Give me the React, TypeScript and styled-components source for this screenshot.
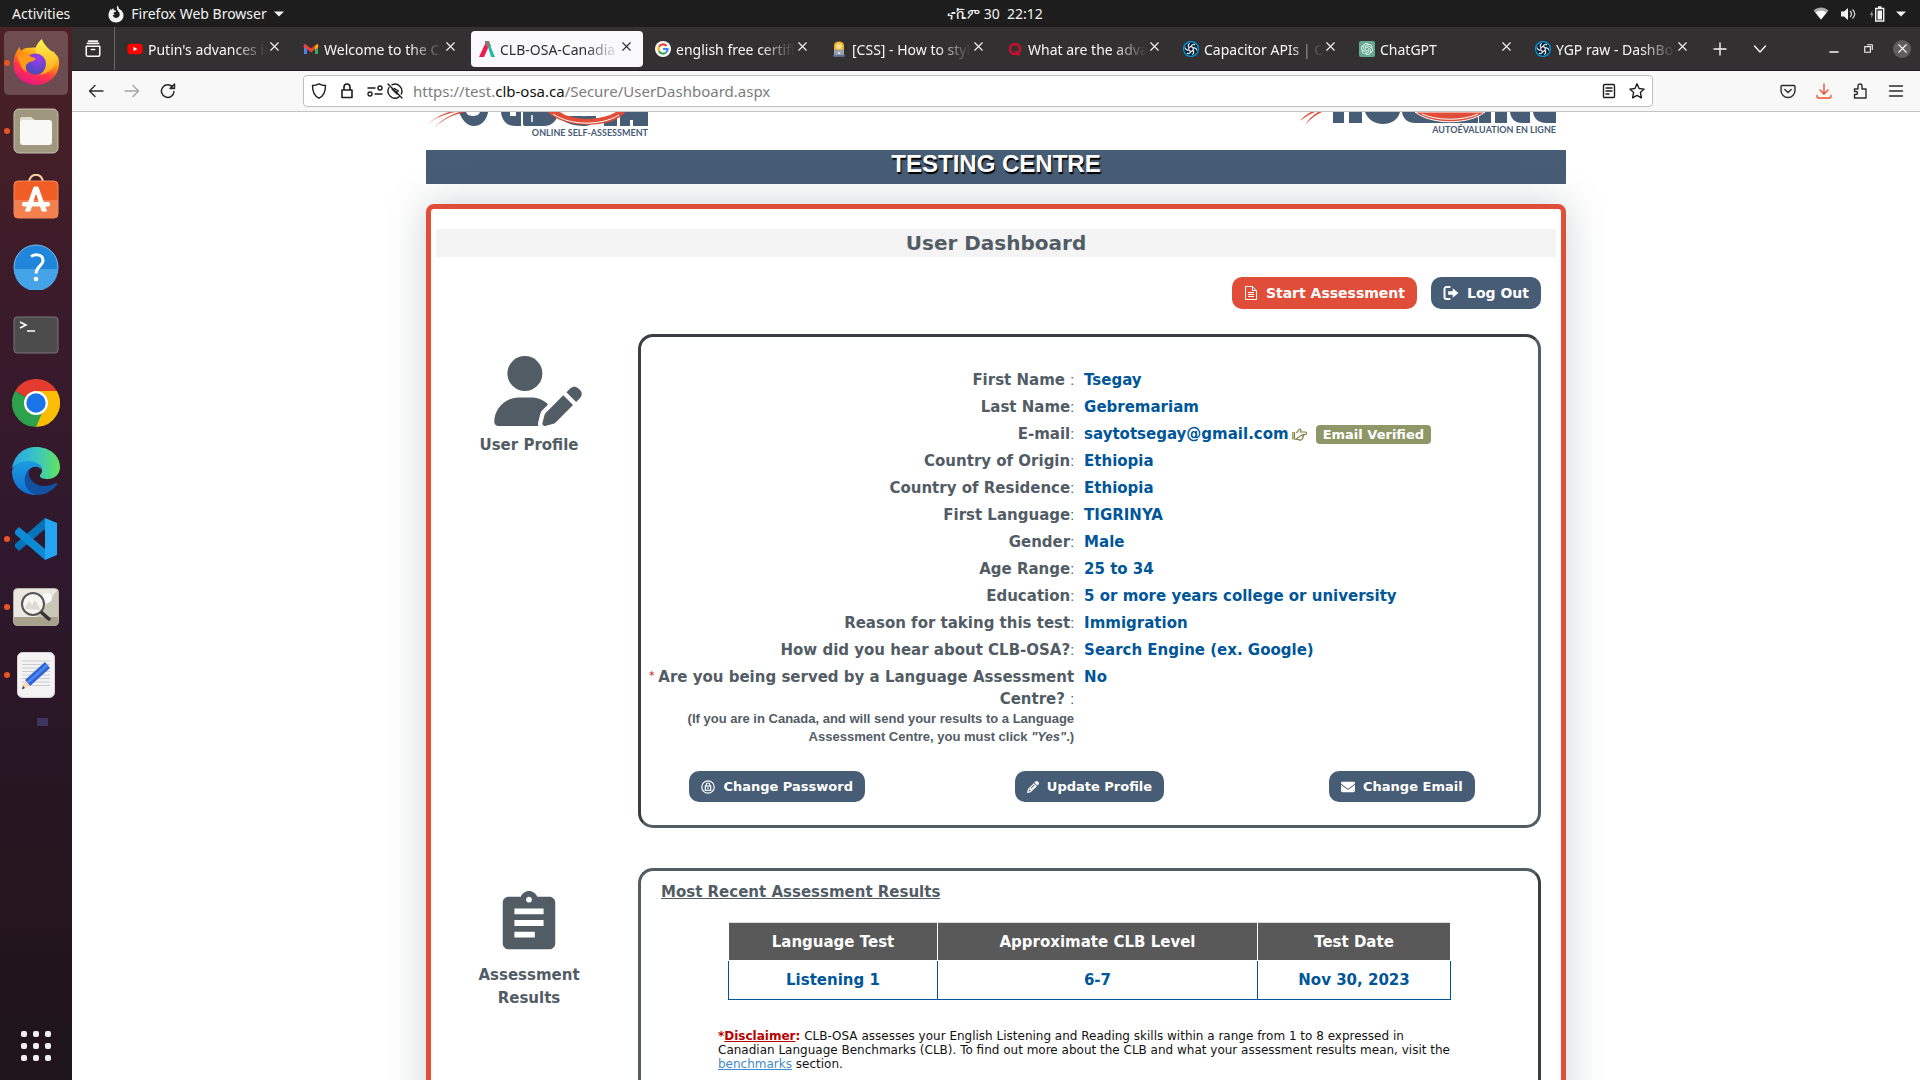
import React from "react";
import styled, { createGlobalStyle } from "styled-components";
import { FaUserPen, FaPencil, FaEnvelope, FaYoutube } from "react-icons/fa6";
import { MdAssignment } from "react-icons/md";
import { SiOpenai } from "react-icons/si";

const uiFont = `"Noto Sans", "Open Sans", sans-serif`;
const pageFont = `"DejaVu Sans", Verdana, sans-serif`;
const slate = "#525c65";
const navy = "#475c75";
const blue = "#005698";
const tomato = "#e04e39";

const GlobalStyle = createGlobalStyle`
  *, *::before, *::after { box-sizing: border-box; }
  html, body { margin: 0; height: 100%; overflow: hidden; background: #fff; }
  button { font: inherit; color: inherit; border: 0; background: none; padding: 0; cursor: pointer; }
  a { color: inherit; }
`;

/* ---------- desktop shell ---------- */

const Desktop = styled.div`
  display: flex;
  flex-direction: column;
  height: 100vh;
  font: 14px/20px ${uiFont};
`;

const TopBar = styled.header`
  display: grid;
  grid-template-columns: 1fr auto 1fr;
  align-items: center;
  height: 27px;
  flex: none;
  padding: 0 14px 0 12px;
  background: #1d1d1d;
  color: #f2f2f2;
`;

const TopGroup = styled.div<{ $end?: boolean }>`
  display: flex;
  align-items: center;
  justify-content: ${(p) => (p.$end ? "flex-end" : "flex-start")};
  gap: ${(p) => (p.$end ? "11px" : "38px")};
`;

const AppMenu = styled.button`
  display: flex;
  align-items: center;
  gap: 7px;
`;

const Clock = styled.time`
  padding-left: 72px;
  white-space: pre;
`;

const Body = styled.div`
  display: flex;
  flex: 1;
  min-height: 0;
`;

const Dock = styled.nav`
  display: flex;
  flex-direction: column;
  align-items: center;
  gap: 4px;
  width: 72px;
  flex: none;
  padding: 4px 0 2px;
  background: linear-gradient(#4a2124 0%, #3b1b2a 25%, #2f182d 50%, #25151f 80%, #1f141a 100%);
`;

const DockItem = styled.button<{ $active?: boolean; $running?: boolean; $last?: boolean }>`
  position: relative;
  display: grid;
  place-items: center;
  width: 64px;
  height: 64px;
  flex: none;
  margin-top: ${(p) => (p.$last ? "auto" : "0")};
  border-radius: 5px;
  background: ${(p) => (p.$active ? "rgba(255,255,255,.2)" : "transparent")};
  &::before {
    content: "";
    display: ${(p) => (p.$running ? "block" : "none")};
    position: absolute;
    left: 0;
    top: 29px;
    width: 6px;
    height: 6px;
    border-radius: 50%;
    background: #e95420;
  }
`;

const DockGhost = styled.span`
  width: 11px;
  height: 8px;
  margin: 7px 0 0 12px;
  background: #3c3560;
`;

/* ---------- browser chrome ---------- */

const Browser = styled.div`
  display: flex;
  flex-direction: column;
  flex: 1;
  min-width: 0;
`;

const TabStrip = styled.div`
  display: flex;
  align-items: stretch;
  height: 44px;
  flex: none;
  background: #333031;
  border-bottom: 1px solid #1c1b22;
  color: #f7f7f7;
`;

const StripButton = styled.button<{ $w: number; $line?: boolean }>`
  display: grid;
  place-items: center;
  width: ${(p) => p.$w}px;
  flex: none;
  border-right: ${(p) => (p.$line ? "1px solid #6b6869" : "0")};
`;

const Tabs = styled.div`
  display: flex;
  flex: 0 1 1584px;
  min-width: 0;
  margin-left: 2px;
`;

const Tab = styled.div<{ $active?: boolean }>`
  display: flex;
  align-items: center;
  flex: 1 1 0;
  min-width: 0;
  margin: 4px 2px 3px;
  padding: 0 9px 0 8px;
  border-radius: 4px;
  background: ${(p) => (p.$active ? "#f9f9fb" : "transparent")};
  color: ${(p) => (p.$active ? "#2e2e2e" : "inherit")};
`;

const TabTitle = styled.span`
  flex: 1;
  min-width: 0;
  margin-left: 5px;
  padding-top: 2px;
  overflow: hidden;
  white-space: nowrap;
  mask-image: linear-gradient(to left, transparent, #000 34px);
`;

const Icon16 = styled.svg`
  width: 16px;
  height: 16px;
  flex: none;
  display: block;
`;

const WindowControls = styled.div`
  display: flex;
  align-items: center;
  margin-left: auto;
  padding-right: 1px;
`;

const Toolbar = styled.div`
  display: flex;
  align-items: center;
  height: 41px;
  flex: none;
  padding: 0 6px;
  background: #f8f8f8;
  border-bottom: 1px solid #c4c4c4;
  color: #2b2b2b;
`;

const ToolButton = styled.button<{ $dim?: boolean; $hot?: boolean }>`
  display: grid;
  place-items: center;
  width: 36px;
  height: 32px;
  flex: none;
  opacity: ${(p) => (p.$dim ? 0.4 : 1)};
  color: ${(p) => (p.$hot ? "#e95420" : "inherit")};
`;

const UrlBar = styled.div`
  display: flex;
  align-items: center;
  flex: 1;
  min-width: 0;
  height: 32px;
  margin: 0 117px;
  padding: 0 7px;
  border: 1px solid #bfbfc3;
  border-radius: 4px;
  background: #fff;
  color: #1d1d1d;
`;

const UrlIcons = styled.div<{ $gap: number }>`
  display: flex;
  align-items: center;
  gap: ${(p) => p.$gap}px;
`;

const UrlText = styled.div`
  flex: 1;
  margin-left: 10px;
  color: #7c7c7c;
  font-size: 15px;
  white-space: nowrap;
  overflow: hidden;
  b { font-weight: 400; color: #111; }
`;

/* ---------- web page ---------- */

const Page = styled.main`
  flex: 1;
  min-height: 0;
  overflow: hidden;
  background: #fff;
  font: 15px/22px ${pageFont};
  color: ${slate};
`;

const Container = styled.div`
  max-width: 1140px;
  margin: 0 auto;
`;

const LogoRow = styled.div`
  display: flex;
  justify-content: space-between;
  height: 38px;
  padding-right: 10px;
`;

const Logo = styled.a`
  display: flex;
  flex-direction: column;
  align-items: flex-end;
  text-decoration: none;
  color: ${navy};
  font: bold 9px/12px Lato, "Liberation Sans", sans-serif;
  svg { display: block; }
`;

const Banner = styled.h1`
  margin: 0 0 20px;
  height: 34px;
  background: ${navy};
  color: #fff;
  text-align: center;
  font: bold 24px/27px "Liberation Sans", Arial, sans-serif;
  text-shadow: 1px 2px 1px #000;
`;

const Shell = styled.section`
  border: 5px solid ${tomato};
  border-radius: 8px;
  padding: 20px 5px;
  background: #fff;
  box-shadow: 0 0 40px rgba(82, 92, 101, 0.28);
`;

const Title = styled.h2`
  margin: 0 0 20px;
  background: #f4f4f4;
  text-align: center;
  font: bold 20px/28px ${pageFont};
`;

const Actions = styled.div`
  display: flex;
  justify-content: flex-end;
  gap: 14px;
  margin: 0 15px 25px 0;
`;

const PillButton = styled.button<{ $hot?: boolean; $small?: boolean; $icon?: number }>`
  display: flex;
  align-items: center;
  gap: 8px;
  height: ${(p) => (p.$small ? "31px" : "32px")};
  padding: 0 12px;
  border-radius: 10px;
  background: ${(p) => (p.$hot ? tomato : navy)};
  color: #fff;
  font: bold ${(p) => (p.$small ? "13px" : "14px")}/20px ${pageFont};
  white-space: nowrap;
  svg { width: ${(p) => p.$icon ?? 14}px; height: ${(p) => p.$icon ?? 14}px; }
`;

const Section = styled.section`
  display: grid;
  grid-template-columns: 186px minmax(0, 1fr);
  gap: 16px;
  margin: 0 15px 40px 0;
`;

const SideLabel = styled.h3`
  display: flex;
  flex-direction: column;
  align-items: center;
  gap: 6px;
  margin: 0;
  padding: 20px 30px 0;
  text-align: center;
  font: bold 15px/23px ${pageFont};
`;

const BigIcon = styled.span<{ $w: number; $h: number }>`
  display: flex;
  align-items: center;
  width: 70px;
  height: ${(p) => p.$h}px;
  svg { flex: none; width: ${(p) => p.$w}px; height: 70px; }
`;

const Panel = styled.div<{ $inset?: boolean }>`
  border: 3px solid ${slate};
  border-color: ${(p) =>
    p.$inset ? `#3a3f45 ${slate} ${slate} #3a3f45` : `${slate} #3a3f45 #3a3f45 ${slate}`};
  border-radius: 15px;
`;

const Fields = styled.dl`
  display: grid;
  grid-template-columns: 23fr 24fr;
  column-gap: 10px;
  row-gap: 5px;
  margin: 32px 2px 25px 0;
  font-weight: bold;
  dt { text-align: right; }
  dd { margin: 0; color: ${blue}; }
`;

const Colon = styled.span`
  font: 14px/20px "Liberation Sans", sans-serif;
`;

const Star = styled.span`
  margin-right: 4px;
  vertical-align: 3px;
  color: #c00;
  font: 10px/10px ${pageFont};
`;

const Hint = styled.small`
  display: block;
  font: bold 13px/18px "Liberation Sans", Arial, sans-serif;
`;

const EmailValue = styled.span`
  display: flex;
  align-items: center;
  gap: 3px;
`;

const Badge = styled.span`
  margin-left: 6px;
  padding: 0 7px;
  border-radius: 4px;
  background: #8f9768;
  color: #fff;
  font: bold 13px/19px ${pageFont};
`;

const ProfileActions = styled.div`
  display: grid;
  grid-template-columns: repeat(3, 1fr);
  justify-items: center;
  margin: 0 -20px 23px;
`;

const ResultsTitle = styled.h4`
  margin: 10px 20px 19px;
  font: bold 15px/22px ${pageFont};
  text-decoration: underline;
`;

const Results = styled.table`
  width: calc(100% - 174px);
  margin: 0 87px 29px;
  border-collapse: separate;
  border-spacing: 0;
  table-layout: fixed;
  font-weight: bold;
  text-align: center;
  th {
    height: 39px;
    padding: 0;
    background: #595959;
    color: #fff;
    border-top: 1px solid #ddd;
    border-bottom: 1px solid #fff;
    border-left: 1px solid #fff;
  }
  td {
    height: 39px;
    padding: 0;
    color: ${blue};
    border-left: 1px solid ${blue};
    border-bottom: 1px solid ${blue};
  }
  th:last-child { border-right: 1px solid #fff; }
  td:last-child { border-right: 1px solid ${blue}; }
`;

const Col = styled.col<{ $w: string }>`
  width: ${(p) => p.$w};
`;

const Disclaimer = styled.p`
  margin: 0 77px 60px;
  color: #111;
  font: 12px/14px ${pageFont};
  strong { color: #b80000; }
  a { color: #428bca; }
`;

/* ---------- icons ---------- */

type LineProps = { d: string; size?: number; width?: number };
const Line = ({ d, size = 16, width = 1.4 }: LineProps) => (
  <svg width={size} height={size} viewBox="0 0 16 16" fill="none" stroke="currentColor" strokeWidth={width} strokeLinecap="round" strokeLinejoin="round">
    <path d={d} />
  </svg>
);

const CloseX = () => <Line d="M4 4l8 8M12 4l-8 8" size={15} width={1.2} />;

const Caret = () => (
  <svg width="10" height="6" viewBox="0 0 10 6"><path d="M0 .5h10L5 5.5z" fill="#f2f2f2" /></svg>
);

const FirefoxMono = () => (
  <svg width="16" height="18" viewBox="0 0 16 18">
    <path d="M9.500.5c1 1.300 1.200 2.200 1.300 3.200C12.900 4.500 15.500 6.800 15.500 10.300c0 4.200-3.200 7.200-7.500 7.200S.5 14.400.5 10.300C.5 7.300 1.800 5.300 3 3.500l.4 1.700L5.200 3l.8 2.300 2.200.4c-.3 1.200-1.400 1.600-2.400 1.700-.6 1 .2 2 1.200 1.900-.6 1-1.700.8-2.300.5.200 2 1.700 3.100 3.500 3.100 2.300 0 3.700-1.700 3.500-3.900C11.500 6.700 9.500 6 9 4 8.700 2.600 9 1.400 9.500.5z" fill="#f2f2f2" />
  </svg>
);

const FirefoxIcon = () => (
  <svg width="46" height="48" viewBox="0 0 46 48">
    <defs>
      <linearGradient id="fxBody" x1=".8" y1="0" x2=".3" y2="1">
        <stop offset="0" stopColor="#fff44f" /><stop offset=".35" stopColor="#ff980e" />
        <stop offset=".65" stopColor="#ff3647" /><stop offset="1" stopColor="#e31587" />
      </linearGradient>
      <radialGradient id="fxGlobe" cx=".6" cy=".25" r=".8">
        <stop offset="0" stopColor="#a338f0" /><stop offset="1" stopColor="#3e4fb0" />
      </radialGradient>
      <linearGradient id="fxFlame" x1=".6" y1="0" x2=".6" y2="1">
        <stop offset="0" stopColor="#fff44f" /><stop offset="1" stopColor="#ffa51d" />
      </linearGradient>
    </defs>
    <path d="M4 12c1-2 2-3 3-4 0 2 .5 3 1 4 2-2 4-3 6-3 8-1 24-2 31 9 2 5 1 12-2 17-4 7-12 11-20 11S5 41 2 33C-1 25 1 17 4 12z" fill="url(#fxBody)" />
    <path d="M29 0c-5 4-8 10-6 14 2 3 8 5 9 11 1 5-2 9-6 11 9-1 17-7 18-17-1-3-2-5-4-7l-1 3C37 9 31 7 29 0z" fill="url(#fxFlame)" />
    <circle cx="22.500" cy="25" r="10.500" fill="url(#fxGlobe)" />
    <path d="M4 15c3-2 6-1 9 1l9 3c1 1 0 3-5 4-2 0-2 2-4 3 0 2-1 4 1 7-6-2-8-10-10-18z" fill="#ff9a1a" />
    <path d="M7 8c0 4 1 5 5 7l-7 2c-1-3 0-6 2-9z" fill="#ff8a16" />
  </svg>
);

const FilesIcon = () => (
  <svg width="46" height="46" viewBox="0 0 46 46">
    <rect x="1" y="1" width="44" height="44" rx="5" fill="#9f987f" stroke="#c4bfae" />
    <path d="M7 11a2 2 0 0 1 2-2h9l4 3v8H7z" fill="#dedbd0" />
    <rect x="7" y="12" width="32" height="25" rx="3" fill="#f8f8f6" />
  </svg>
);

const SoftwareIcon = () => (
  <svg width="46" height="50" viewBox="0 0 46 50">
    <path d="M16 9c0-11 14-11 14 0" fill="none" stroke="#fbd3a5" strokeWidth="2" />
    <rect x="1" y="7" width="44" height="37" rx="4" fill="#f05e26" stroke="#f58a5c" />
    <path d="M1 26h44v14a4 4 0 0 1-4 4H5a4 4 0 0 1-4-4z" fill="#f4804f" />
    <path d="M21 13h4l8.500 24h-4.500L23 18l-6 19h-4.500z" fill="#fff" stroke="#fff" />
    <rect x="9" y="28" width="28" height="4.500" rx="2" fill="#fff" />
  </svg>
);

const HelpIcon = () => (
  <svg width="46" height="46" viewBox="0 0 46 46">
    <circle cx="23" cy="23" r="22" fill="#1f86dc" stroke="#7bbcf0" />
    <path d="M1 25a22 22 0 0 0 44 0z" fill="#45a3e8" />
    <path d="M18 12.500c5-3 12-2 12 4 0 5-7 6-7 13" fill="none" stroke="#fff" strokeWidth="3" />
    <circle cx="23" cy="35" r="2.300" fill="#fff" />
  </svg>
);

const TerminalIcon = () => (
  <svg width="46" height="38" viewBox="0 0 46 38">
    <rect x="1" y="1" width="44" height="36" rx="3" fill="#4c4c4c" stroke="#767676" />
    <path d="M7 6l6 3-6 3M14 15h8" fill="none" stroke="#fff" strokeWidth="1.600" />
  </svg>
);

const ChromeIcon = () => (
  <svg width="48" height="48" viewBox="0 0 48 48">
    <path d="M24 24L3.200 12A24 24 0 0 1 44.800 12z" fill="#e33b2e" />
    <path d="M24 24L3.200 12A24 24 0 0 0 24 48l10.400-18z" fill="#2da24c" />
    <path d="M24 24h10.400L24 48A24 24 0 0 0 44.800 12H24z" fill="#fbbc04" />
    <circle cx="24" cy="24" r="12" fill="#fff" /><circle cx="24" cy="24" r="9.700" fill="#1a73e8" />
  </svg>
);

const EdgeIcon = () => (
  <svg width="48" height="48" viewBox="0 0 48 48">
    <defs>
      <linearGradient id="edTop" x1="0" y1=".5" x2="1" y2=".5">
        <stop offset="0" stopColor="#2aa5e8" /><stop offset=".5" stopColor="#38c4c6" /><stop offset="1" stopColor="#62e45c" />
      </linearGradient>
      <linearGradient id="edBlue" x1="0" y1="0" x2="0" y2="1">
        <stop offset="0" stopColor="#1b9de2" /><stop offset="1" stopColor="#0f6fd0" />
      </linearGradient>
    </defs>
    <path d="M0 22C2 7 13 0 24 0c14 0 24 9 24 20 0 8-6 12-12 12-5 0-8-1-8-3s2-2 2-6c0-5-6-8-13-8C9 15 3 18 0 22z" fill="url(#edTop)" />
    <path d="M0 24c2-6 9-10 16-10 8 0 14 4 14 9-2-3-8-5-12-1-8 9-1 21 6 26C10 48 0 38 0 24z" fill="url(#edBlue)" />
    <path d="M18 21c-4 8 3 18 14 18 5 0 8-1 12-3 1 0 2 1 1 2-5 6-12 10-19 10-9-1-15-10-13-18 1-5 3-7 5-9z" fill="#12519f" />
  </svg>
);

const CodeIcon = () => (
  <svg width="44" height="44" viewBox="0 0 44 44">
    <path d="M31 1L43 6v32l-12 5z" fill="#24a5f2" />
    <path d="M31 1v11L5 34l-4-4v-3z" fill="#0673b8" />
    <path d="M31 43V32L5 10l-4 4v3z" fill="#0d8ad6" />
  </svg>
);

const ViewerIcon = () => (
  <svg width="46" height="38" viewBox="0 0 46 38">
    <rect x=".5" y=".5" width="45" height="37" rx="4" fill="#e9e9e2" stroke="#b5b3a4" />
    <path d="M45 1L24 29h21z" fill="#c9c7b6" /><path d="M1 29h44v5a4 4 0 0 1-4 4H5a4 4 0 0 1-4-4z" fill="#a8a28c" />
    <circle cx="34" cy="10" r="5" fill="#fafafa" />
    <circle cx="20" cy="16" r="11" fill="#f7f7f5" fillOpacity=".85" stroke="#555" strokeWidth="2" />
    <path d="M11 21l5-8 3 4 3-5 6 10z" fill="#dedcd2" />
    <path d="M28 24l9 8" stroke="#333" strokeWidth="3.500" />
  </svg>
);

const EditorIcon = () => (
  <svg width="38" height="46" viewBox="0 0 38 46">
    <rect x=".5" y=".5" width="37" height="45" rx="5" fill="#f3f3f3" stroke="#d4d4d4" />
    <path d="M5 9h28M5 12.500h28M5 16h28M5 19.500h28M5 23h28M5 26.500h28M5 30h28M5 33.500h28" stroke="#cdcdcd" />
    <path d="M28 10l5 6-20 18-5-6z" fill="#2d63d6" /><path d="M29.500 12l1.700 2-20 18-1.700-2z" fill="#5288ee" />
    <path d="M8 28l5 6-8 3z" fill="#f4d9b4" /><path d="M6 34l2 2-3 1.500z" fill="#333" />
  </svg>
);

const GridIcon = () => (
  <svg width="30" height="30" viewBox="0 0 30 30" fill="#efefef">
    {[0, 12, 24].map((y) => [0, 12, 24].map((x) => <rect key={`${x}-${y}`} x={x} y={y} width="6" height="6" rx="2" />))}
  </svg>
);

const GmailFav = () => (
  <Icon16 viewBox="0 0 16 16">
    <path d="M1 3v10h3V7z" fill="#4285f4" /><path d="M15 3v10h-3V7z" fill="#34a853" />
    <path d="M1 4l7 5.500L15 4" fill="none" stroke="#ea4335" strokeWidth="3" />
    <path d="M12 5.500L15 3v3l-3 2.500z" fill="#fbbc04" />
  </Icon16>
);
const ClbFav = () => (
  <Icon16 viewBox="0 0 16 16">
    <path d="M6 0h4l2 5-3 2L6 6z" fill="#8a7a72" /><path d="M6 3l3 4-4 9H0z" fill="#f2174d" /><path d="M9 6l2-2 5 12h-4z" fill="#28b8a5" />
  </Icon16>
);
const GoogleFav = () => (
  <Icon16 viewBox="0 0 16 16">
    <circle cx="8" cy="8" r="8" fill="#fff" />
    <g fill="none" strokeWidth="2.200">
      <path d="M11.500 5A4.600 4.600 0 0 0 4 5.800" stroke="#ea4335" /><path d="M4 5.800a4.600 4.600 0 0 0 0 4.400" stroke="#fbbc04" />
      <path d="M4 10.200a4.600 4.600 0 0 0 7 1.300" stroke="#34a853" /><path d="M11 11.500c1-.8 1.600-2 1.600-3.500H8" stroke="#4285f4" />
    </g>
  </Icon16>
);
const CoderFav = () => (
  <Icon16 viewBox="0 0 16 16">
    <path d="M3 9V4.500C3 2 5 .5 8 .5s5 1.500 5 4V9z" fill="#f0b429" /><circle cx="8" cy="5.500" r="3" fill="#ffdc8a" />
    <rect x="3" y="8.500" width="10" height="7" rx="1" fill="#9aa2ab" /><path d="M2 15.500h12V14H2z" fill="#5d6f97" /><circle cx="8" cy="12" r="1" fill="#eee" />
  </Icon16>
);
const QuoraFav = () => (
  <Icon16 viewBox="0 0 16 16">
    <circle cx="8" cy="8" r="5" fill="none" stroke="#c8102e" strokeWidth="2.600" /><path d="M8.500 10l3.500 4.500" stroke="#c8102e" strokeWidth="2" />
  </Icon16>
);
const QuasarFav = () => (
  <Icon16 viewBox="0 0 16 16">
    <circle cx="8" cy="8" r="7.400" fill="#0b1a28" stroke="#00a3e8" strokeWidth="1.200" />
    <g fill="none" stroke="#e6f4fb" strokeWidth="1.200">
      <path d="M8 5.500c1-2.500 3-2.300 4-1.500M10.400 7c2.500-.5 3.400 1.200 3.200 2.500M10 9.400c1.700 2 .5 3.600-.8 4.100M8 10.500c-1 2.500-3 2.300-4 1.500M5.600 9c-2.500.5-3.400-1.200-3.200-2.500M6 6.600C4.300 4.600 5.500 3 6.800 2.500" />
      <circle cx="8" cy="8" r="2.300" />
    </g>
  </Icon16>
);
const ChatBox = styled.span`
  display: grid;
  place-items: center;
  width: 16px;
  height: 16px;
  flex: none;
  border-radius: 2px;
  background: #66a992;
  svg { width: 12px; height: 12px; }
`;
const TubeFav = styled(FaYoutube)`
  width: 16px;
  height: 16px;
  flex: none;
  color: #f00;
  background: radial-gradient(circle, #fff 0 4px, transparent 4px);
`;

const LeftLogoArt = () => (
  <svg width="222" height="15" viewBox="0 0 222 15">
    <g fill={navy}>
      <path d="M33 0h7c1 3 4 4 7 4s6-1 7-4h8c-1 8-7 14-14 14S36 8 33 0z" />
      <path d="M75 0h9v4h6V0h5v14h-6c-8 0-13-5-14-14z" />
      <path d="M97 0h35c0 8-6 14-14 14H99c-1 0-2-1-2-2z" />
      <path d="M130 4h40v4c-3 4-7 6-13 6-10 0-20-4-27-10z" />
      <path d="M178 7l13-3v10h-13zM194 0h28v14h-15V8h-3v6h-10z" />
    </g>
    <path d="M106 3v7" stroke="#fff" strokeWidth="1.500" />
    <path d="M1 13C9 6 18 2 30 0h-7C14 3 6 8 1 13zM8 16C16 8 26 3 39 0h-6C22 4 14 9 8 16z" fill={tomato} />
    <path d="M122 0c14 16 64 18 77 0h-9c-14 9-44 9-56 0z" fill={tomato} />
    <path d="M127 2c18 12 48 12 66 1" fill="none" stroke="#fff" />
    <path d="M148 0c4 5 14 6 20 0z" fill="#fff" />
  </svg>
);

const RightLogoArt = () => (
  <svg width="256" height="12" viewBox="0 0 256 12">
    <g fill={navy}>
      <path d="M33 0h11v11H33zM49 0h13v11H49z" />
      <path d="M65 0h35c-2 8-9 12-17 12S68 8 65 0zM102 0h20v11h-7c-7 0-12-4-13-11z" />
      <path d="M122 4h56v7h-56zM179 0h12v11h-12zM195 0h12v11h-12z" />
      <path d="M210 0h20v11h-8c-7 0-11-4-12-11zM233 0h23v11h-10c-7 0-12-4-13-11z" />
    </g>
    <path d="M0 9C5 5 10 2 15 0h-4C7 2 3 5 0 9zM5 13C10 7 16 3 22 0h-4C13 3 8 8 5 13z" fill={tomato} />
    <path d="M115 0c16 13 54 13 70 0z" fill={tomato} stroke="#fff" />
    <path d="M122 2c16 7 40 7 56 0" fill="none" stroke="#fff" />
  </svg>
);

const FileText = () => (
  <svg viewBox="0 0 14 14" fill="none" stroke="currentColor">
    <path d="M1.500.5h7l4 4v9h-11zM8.500.5v4h4M4 6.500h6M4 8.500h6M4 10.500h6" />
  </svg>
);
const SignOut = () => (
  <svg viewBox="0 0 14 14">
    <path d="M6.500 1.800H3a1.700 1.700 0 0 0-1.700 1.700v7A1.700 1.700 0 0 0 3 12.200h3.500" fill="none" stroke="currentColor" strokeWidth="1.700" />
    <path d="M4.500 5.500H8.500V2.800L13.500 7l-5 4.200V8.500h-4z" fill="currentColor" />
  </svg>
);
const LockCircle = () => (
  <svg viewBox="0 0 14 14" fill="none" stroke="currentColor" strokeWidth="1.200">
    <circle cx="7" cy="7" r="6.200" /><path d="M5.200 6V4.800a1.800 1.800 0 0 1 3.600 0V6" />
    <rect x="4.300" y="6" width="5.400" height="4.300" /><path d="M7 7.300v1.700" />
  </svg>
);
const PointingHand = () => (
  <svg width="15" height="13" viewBox="0 0 15 13" fill="none" stroke="#7d8446" strokeWidth="1.200">
    <path d="M.8 4v7.500M2.500 4v7.500" />
    <path d="M4 4.500c2 0 2.500-3.500 4-3.500 1 0 1.200 1.200.5 3H13.200a1.200 1.200 0 0 1 0 2.600H10.500M10.800 6.600c1 .7.8 1.800 0 2.100.6.900.2 1.700-.5 1.900 0 1-.6 1.500-1.700 1.500-2 0-2.600-1-4.600-1z" />
  </svg>
);

/* ---------- data ---------- */

const dock = [
  { name: "Firefox", icon: <FirefoxIcon />, active: true, running: true },
  { name: "Files", icon: <FilesIcon />, running: true },
  { name: "Software", icon: <SoftwareIcon /> },
  { name: "Help", icon: <HelpIcon /> },
  { name: "Terminal", icon: <TerminalIcon /> },
  { name: "Chrome", icon: <ChromeIcon /> },
  { name: "Edge", icon: <EdgeIcon /> },
  { name: "Code", icon: <CodeIcon />, running: true },
  { name: "Image viewer", icon: <ViewerIcon />, running: true },
  { name: "Text editor", icon: <EditorIcon />, running: true },
];

const tabs = [
  { title: "Putin's advances in", icon: <TubeFav /> },
  { title: "Welcome to the C", icon: <GmailFav /> },
  { title: "CLB-OSA-Canadia", icon: <ClbFav />, active: true },
  { title: "english free certifi", icon: <GoogleFav /> },
  { title: "[CSS] - How to styl", icon: <CoderFav /> },
  { title: "What are the adva", icon: <QuoraFav /> },
  { title: "Capacitor APIs | Q", icon: <QuasarFav /> },
  { title: "ChatGPT", icon: <ChatBox><SiOpenai /></ChatBox> },
  { title: "YGP raw - DashBo", icon: <QuasarFav /> },
];

const fields: { label: string; value: React.ReactNode }[] = [
  { label: "First Name ", value: "Tsegay" },
  { label: "Last Name", value: "Gebremariam" },
  {
    label: "E-mail",
    value: (
      <EmailValue>
        saytotsegay@gmail.com
        <PointingHand />
        <Badge>Email Verified</Badge>
      </EmailValue>
    ),
  },
  { label: "Country of Origin", value: "Ethiopia" },
  { label: "Country of Residence", value: "Ethiopia" },
  { label: "First Language", value: "TIGRINYA" },
  { label: "Gender", value: "Male" },
  { label: "Age Range", value: "25 to 34" },
  { label: "Education", value: "5 or more years college or university" },
  { label: "Reason for taking this test", value: "Immigration" },
  { label: "How did you hear about CLB-OSA?", value: "Search Engine (ex. Google)" },
];

const CloseButton = styled.span`
  display: grid;
  place-items: center;
  width: 18px;
  height: 18px;
  border-radius: 50%;
  background: #5f5d5e;
`;

export default function App() {
  return (
    <Desktop>
      <GlobalStyle />
      <TopBar>
        <TopGroup>
          <button>Activities</button>
          <AppMenu><FirefoxMono />Firefox Web Browser<Caret /></AppMenu>
        </TopGroup>
        <Clock>ኖቬም 30  22:12</Clock>
        <TopGroup $end>
          <svg width="16" height="13" viewBox="0 0 16 13"><path d="M.5 3.500C5-.5 11-.5 15.500 3.500L8 12.500z" fill="#aaa" /><path d="M2.500 5.500c3.500-2.500 7.500-2.500 11 0L8 12.500z" fill="#fff" /></svg>
          <svg width="18" height="14" viewBox="0 0 18 14"><path d="M1 4.500h3L8 1v12L4 9.500H1z" fill="#f2f2f2" /><path d="M10 4c2 2 2 4 0 6M12.500 2.500c3 3 3 6 0 9" fill="none" stroke="#ccc" strokeWidth="1.300" /></svg>
          <svg width="16" height="16" viewBox="0 0 16 16"><path d="M3.500 4L1 9h1.500L2 12.500 4.500 7.500H3z" fill="#999" /><path d="M6.700 2.500h8v12.500h-8zM9 1h3.500" fill="none" stroke="#f2f2f2" strokeWidth="1.400" /><path d="M8.500 4.500h4.500v9H8.500z" fill="#f2f2f2" /></svg>
          <Caret />
        </TopGroup>
      </TopBar>
      <Body>
        <Dock aria-label="Dock">
          {dock.map((d) => (
            <DockItem key={d.name} aria-label={d.name} $active={d.active} $running={d.running}>{d.icon}</DockItem>
          ))}
          <DockGhost />
          <DockItem aria-label="Show applications" $last><GridIcon /></DockItem>
        </Dock>
        <Browser>
          <TabStrip>
            <StripButton $w={43} $line aria-label="Recent browsing">
              <Line d="M2 5.500h12v7.500a1.500 1.500 0 0 1-1.500 1.500h-9A1.500 1.500 0 0 1 2 13zM3 3h10M4 1h8M6.500 8.500h3" size={18} />
            </StripButton>
            <Tabs>
              {tabs.map((t) => (
                <Tab key={t.title} $active={t.active}>
                  {t.icon}
                  <TabTitle>{t.title}</TabTitle>
                  <button aria-label="Close tab"><CloseX /></button>
                </Tab>
              ))}
            </Tabs>
            <StripButton $w={38} aria-label="New tab"><Line d="M8 2v12M2 8h12" /></StripButton>
            <StripButton $w={42} aria-label="List all tabs"><Line d="M2.500 5l5.500 6 5.500-6" /></StripButton>
            <WindowControls>
              <StripButton $w={34} aria-label="Minimise"><Line d="M4 11h8" width={1.6} /></StripButton>
              <StripButton $w={34} aria-label="Restore"><Line d="M4 6h6v6H4zM7 4h5v5" width={1.2} size={15} /></StripButton>
              <StripButton $w={34} aria-label="Close window"><CloseButton><CloseX /></CloseButton></StripButton>
            </WindowControls>
          </TabStrip>
          <Toolbar>
            <ToolButton aria-label="Back"><Line d="M15 8H1.500M7 2.500L1.500 8 7 13.500" /></ToolButton>
            <ToolButton aria-label="Forward" $dim><Line d="M1 8h13.500M9 2.500L14.500 8 9 13.500" /></ToolButton>
            <ToolButton aria-label="Reload"><Line d="M14 8.500A6.300 6.300 0 1 1 12.500 4M14.500 1v4.500H10z" width={1.5} /></ToolButton>
            <UrlBar>
              <UrlIcons $gap={12}>
                <Line d="M8 .8c2 1.200 4 1.700 6.500 1.700 0 6-1.500 10.500-6.500 12.700C3 13 1.500 8.500 1.500 2.500 4 2.500 6 2 8 .8z" />
                <Line d="M3 7h10v7.500H3zM5 7V4a3 3 0 0 1 6 0v3" width={1.6} />
                <UrlIcons $gap={4}>
                  <Line d="M1 5h7M15 5a2 2 0 1 1-4 0 2 2 0 0 1 4 0M15 11H8M5 11a2 2 0 1 1-4 0 2 2 0 0 1 4 0" />
                  <Line d="M1 1l14 14M5 1.800A7 7 0 0 1 14.300 11M12 13.800A7 7 0 0 1 2 4.500M5 6l5 5V8.500M7.500 5.500L11.500 8" />
                </UrlIcons>
              </UrlIcons>
              <UrlText>https://test.<b>clb-osa.ca</b>/Secure/UserDashboard.aspx</UrlText>
              <UrlIcons $gap={12}>
                <Line d="M3.500 1.500h9a1 1 0 0 1 1 1v11a1 1 0 0 1-1 1h-9a1 1 0 0 1-1-1v-11a1 1 0 0 1 1-1zM5 5h6M5 8h6M5 11h3" />
                <Line d="M8 .8l2.100 4.700 5 .6-3.700 3.500 1 5.200L8 12.300l-4.400 2.500 1-5.200L.9 6.100l5-.6z" />
              </UrlIcons>
            </UrlBar>
            <ToolButton aria-label="Pocket"><Line d="M2 2.500h12a1 1 0 0 1 1 1V7.500A7 7 0 0 1 1 7.500v-4a1 1 0 0 1 1-1zM4.800 6.500L8 9.500l3.200-3" /></ToolButton>
            <ToolButton aria-label="Downloads" $hot><Line d="M8 1v9.500M4 7l4 4 4-4M1 12.500v1a1.500 1.500 0 0 0 1.500 1.500h11a1.500 1.500 0 0 0 1.500-1.500v-1" /></ToolButton>
            <ToolButton aria-label="Extensions"><Line d="M2.500 6H6V3a2 2 0 0 1 4 0v3h4v9H2.500v-3.500H4a1.500 1.500 0 0 0 0-3H2.500z" /></ToolButton>
            <ToolButton aria-label="Menu"><Line d="M1.500 3h13M1.500 8h13M1.500 13h13" /></ToolButton>
          </Toolbar>
          <Page>
            <Container>
              <LogoRow>
                <Logo href="#en"><LeftLogoArt />ONLINE SELF-ASSESSMENT</Logo>
                <Logo href="#fr"><RightLogoArt />AUTOÉVALUATION EN LIGNE</Logo>
              </LogoRow>
              <Banner>TESTING CENTRE</Banner>
              <Shell>
                <Title>User Dashboard</Title>
                <Actions>
                  <PillButton $hot><FileText />Start Assessment</PillButton>
                  <PillButton $icon={16}><SignOut />Log Out</PillButton>
                </Actions>
                <Section>
                  <SideLabel><BigIcon $w={88} $h={74}><FaUserPen /></BigIcon>User Profile</SideLabel>
                  <Panel $inset>
                    <Fields>
                      {fields.map((f) => (
                        <React.Fragment key={f.label}>
                          <dt>{f.label}<Colon>:</Colon></dt>
                          <dd>{f.value}</dd>
                        </React.Fragment>
                      ))}
                      <dt>
                        <Star>*</Star>Are you being served by a Language Assessment Centre? <Colon>:</Colon>
                        <Hint>
                          (If you are in Canada, and will send your results to a Language<br />
                          Assessment Centre, you must click <em>"Yes"</em>.)
                        </Hint>
                      </dt>
                      <dd>No</dd>
                    </Fields>
                    <ProfileActions>
                      <PillButton $small><LockCircle />Change Password</PillButton>
                      <PillButton $small $icon={12}><FaPencil />Update Profile</PillButton>
                      <PillButton $small><FaEnvelope />Change Email</PillButton>
                    </ProfileActions>
                  </Panel>
                </Section>
                <Section>
                  <SideLabel><BigIcon $w={70} $h={70}><MdAssignment /></BigIcon>Assessment Results</SideLabel>
                  <Panel>
                    <ResultsTitle>Most Recent Assessment Results</ResultsTitle>
                    <Results>
                      <colgroup><Col $w="209px" /><Col $w="auto" /><Col $w="194px" /></colgroup>
                      <thead>
                        <tr><th>Language Test</th><th>Approximate CLB Level</th><th>Test Date</th></tr>
                      </thead>
                      <tbody>
                        <tr><td>Listening 1</td><td>6-7</td><td>Nov 30, 2023</td></tr>
                      </tbody>
                    </Results>
                    <Disclaimer>
                      <strong>*<u>Disclaimer</u>:</strong> CLB-OSA assesses your English Listening and Reading skills within a range from 1 to 8 expressed in Canadian Language Benchmarks (CLB). To find out more about the CLB and what your assessment results mean, visit the <a href="#benchmarks">benchmarks</a> section.
                    </Disclaimer>
                  </Panel>
                </Section>
              </Shell>
            </Container>
          </Page>
        </Browser>
      </Body>
    </Desktop>
  );
}
